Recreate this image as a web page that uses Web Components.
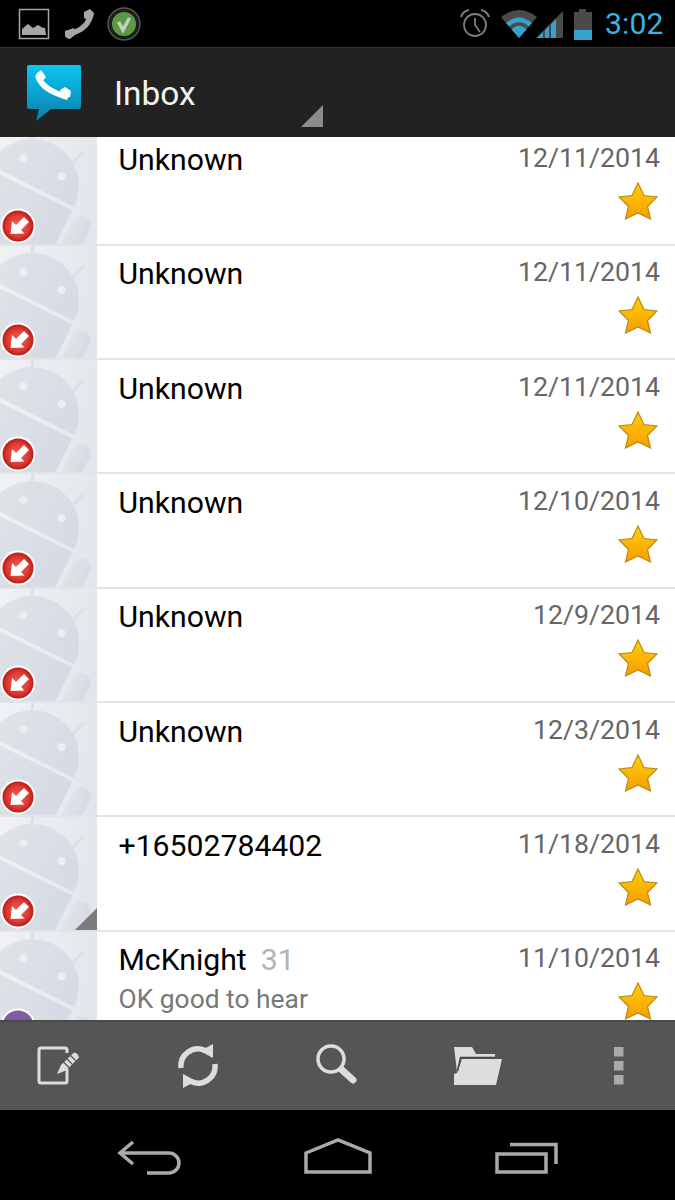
<!DOCTYPE html>
<html>
<head>
<meta charset="utf-8">
<title>Inbox</title>
<style>
  html, body { margin: 0; padding: 0; background: #000; }
  body { width: 675px; height: 1200px; overflow: hidden; display: flex; flex-direction: column; font-family: Roboto, "Liberation Sans", sans-serif; }
  message-list { flex: 1; min-height: 0; }
</style>
</head>
<body>
<status-bar></status-bar>
<action-bar>Inbox</action-bar>
<message-list>
  <message-row date="12/11/2014">Unknown</message-row>
  <message-row date="12/11/2014">Unknown</message-row>
  <message-row date="12/11/2014">Unknown</message-row>
  <message-row date="12/10/2014">Unknown</message-row>
  <message-row date="12/9/2014">Unknown</message-row>
  <message-row date="12/3/2014">Unknown</message-row>
  <message-row date="11/18/2014" corner>+16502784402</message-row>
  <message-row date="11/10/2014" badge="text">McKnight<span slot="count">31</span><span slot="snippet">OK good to hear</span></message-row>
</message-list>
<bottom-toolbar></bottom-toolbar>
<nav-bar></nav-bar>

<script>
/**
 * top status bar, notification icons on the left and system icons on the right
 */
class StatusBar extends HTMLElement {
  constructor() {
    super();
    this.attachShadow({ mode: "open" });
    this.shadowRoot.innerHTML = `
    <style>
      :host { display: flex; flex: none; height: 47px; background: #000; align-items: center; padding: 0 11px 0 18px; box-sizing: border-box; }
      svg { display: block; flex: none; }
      .left { display: flex; align-items: center; }
      .right { display: flex; align-items: center; margin-left: auto; }
      .time { color: #33b5e5; font-size: 30px; line-height: 47px; margin-left: 12px; width: 59px; white-space: nowrap; letter-spacing: 0.2px; }
    </style>
    <div class="left">
      <svg width="32" height="32" viewBox="0 0 32 32">
        <rect x="1.5" y="1.5" width="29" height="29" fill="none" stroke="#a6a6a6" stroke-width="1.5"/>
        <path d="M4 27V21L10 16L15 20L20 17L24 19.5L27 20L28 27Z" fill="#a6a6a6"/>
      </svg>
      <svg width="32" height="32" viewBox="0 0 32 32" style="margin-left:13px">
        <path d="M28 5Q26 21 6 26" fill="none" stroke="#a6a6a6" stroke-width="5.5"/>
        <path d="M21 4L27 1L31 5Q30 11 27 13L21 10Z M2 23L11 20L13 26L7 31Q2 30 2 27Z" fill="#a6a6a6"/>
      </svg>
      <svg width="34" height="34" viewBox="0 0 34 34" style="margin-left:12px">
        <circle cx="17" cy="17" r="16" fill="#1c1c1c" stroke="#555" stroke-width="1.5"/>
        <circle cx="17" cy="17" r="12" fill="#5b9a43"/>
        <path d="M11.5 15L16 23L22.5 11" fill="none" stroke="#c9cfc6" stroke-width="3.5"/>
      </svg>
    </div>
    <div class="right">
      <svg width="32" height="32" viewBox="0 0 32 32">
        <circle cx="16" cy="17" r="11" fill="none" stroke="#7d7d7d" stroke-width="1.8"/>
        <path d="M16 10V17L21 24" fill="none" stroke="#7d7d7d" stroke-width="1.8"/>
        <path d="M2 9Q4 3 10 2M30 9Q28 3 22 2" fill="none" stroke="#7d7d7d" stroke-width="2"/>
      </svg>
      <svg width="36" height="32" viewBox="0 0 36 32" style="margin-left:10px">
        <path d="M0 9Q18 -5 36 9L18 30Z" fill="#4a4a4a"/>
        <path d="M5 15Q18 4 31 15L28 18.5Q18 10 8 18.5Z" fill="#33a3cc"/>
        <path d="M10.5 21.5Q18 14 25.5 21.5L18 30Z" fill="#33a3cc"/>
      </svg>
      <svg width="27" height="32" viewBox="0 0 27 32" style="margin-left:-1px">
        <path d="M0 30L27 3V30Z" fill="#4a4a4a"/>
        <path d="M1 30L7 24V30ZM9 30V22L13 18V30ZM15 30V16L20 11V30Z" fill="#33a3cc"/>
      </svg>
      <svg width="20" height="32" viewBox="0 0 20 32" style="margin-left:10px">
        <path d="M6 1H13V4H19V32H1V4H6Z" fill="#4a4a4a"/>
        <rect x="1" y="22" width="18" height="10" fill="#33a3cc"/>
      </svg>
      <span class="time">3:02</span>
    </div>`;
  }
}
customElements.define("status-bar", StatusBar);

/**
 * action bar, app logo + title + spinner corner
 */
class ActionBar extends HTMLElement {
  constructor() {
    super();
    this.attachShadow({ mode: "open" });
    this.shadowRoot.innerHTML = `
    <style>
      :host { display: flex; flex: none; height: 90px; background: #222; border-top: 1px solid #333; box-sizing: border-box; align-items: center; padding-left: 27px; position: relative; color: #f2f2f2; }
      svg { display: block; flex: none; }
      .title { display: flex; flex: none; width: 208px; height: 89px; padding-left: 33px; font-size: 33.4px; line-height: 91px; box-sizing: border-box; position: relative; }
      .corner { position: absolute; left: 220px; bottom: 10px; }
    </style>
    <svg width="54" height="56" viewBox="0 0 54 56">
      <defs>
        <linearGradient id="bubble" x1="0" y1="0" x2="0" y2="1">
          <stop offset="0" stop-color="#0cc4f2"/>
          <stop offset="1" stop-color="#0a7fa6"/>
        </linearGradient>
      </defs>
      <path d="M2 0H52Q54 0 54 2V42Q54 44 52 44H24L9 56L12 44H2Q0 44 0 42V2Q0 0 2 0Z" fill="url(#bubble)"/>
      <path d="M11 10Q14 25 41 32" fill="none" stroke="#fff" stroke-width="6"/>
      <path d="M9 9L14 5L19 12L15 17Z M33 25L38 22L44 26L43 32L36 34Z" fill="#fff"/>
    </svg>
    <div class="title"><slot></slot>
      <svg class="corner" width="22" height="22" viewBox="0 0 22 22"><path d="M0 22L22 0V22Z" fill="#8c8c8c"/></svg>
    </div>`;
  }
}
customElements.define("action-bar", ActionBar);

/**
 * scrolling list, clips the row that runs under the toolbar
 * the list is scrolled a few px so the first row loses its top
 */
class MessageList extends HTMLElement {
  constructor() {
    super();
    this.attachShadow({ mode: "open" });
    this.shadowRoot.innerHTML = `
    <style>
      :host { display: block; overflow: hidden; background: #fff; }
      .scroller { display: flex; flex-direction: column; margin-top: -5.5px; }
    </style>
    <div class="scroller"><slot></slot></div>`;
  }
}
customElements.define("message-list", MessageList);

/**
 * default contact picture, the grey android cut off by the frame
 */
class ContactPhoto extends HTMLElement {
  constructor() {
    super();
    this.attachShadow({ mode: "open" });
    const badge = this.getAttribute("badge");
    this.shadowRoot.innerHTML = `
    <style>
      :host { display: block; flex: none; width: 97px; height: 100%; position: relative; overflow: hidden; background: linear-gradient(100deg, #f0f2f4, #e1e5ea); }
      svg { display: block; position: absolute; }
      .android { left: 0; top: 0; }
      .badge { left: 0; top: 76px; }
      .corner { right: 0; bottom: 0; }
    </style>
    <svg class="android" width="97" height="113" viewBox="0 0 97 113">
      <defs>
        <linearGradient id="droid" x1="0" y1="0" x2="1" y2="0">
          <stop offset="0" stop-color="#e0e3e8"/>
          <stop offset="1" stop-color="#d5dae3"/>
        </linearGradient>
      </defs>
      <g transform="translate(32 54) rotate(26.5)" fill="url(#droid)">
        <path d="M-47 0A47 47 0 0 1 47 0Z"/>
        <rect x="-47" y="4" width="94" height="110"/>
        <rect x="52" y="4" width="19" height="70" rx="9.5"/>
        <path d="M-21 -42L-26 -56M26 -38L31 -54" stroke="#dce0e6" stroke-width="3"/>
        <circle cx="-20" cy="-21" r="4" fill="#eceef1"/>
        <circle cx="22" cy="-22" r="4" fill="#eceef1"/>
      </g>
    </svg>
    ${badge === "text" ? `
    <svg class="badge" width="36" height="36" viewBox="0 0 36 36">
      <circle cx="18" cy="18" r="17.5" fill="#fff"/>
      <circle cx="18" cy="18" r="15.5" fill="#7d5ea3"/>
    </svg>` : `
    <svg class="badge" width="36" height="36" viewBox="0 0 36 36">
      <defs>
        <radialGradient id="red" cx="0.5" cy="0.5" r="0.5">
          <stop offset="0" stop-color="#f0665c"/>
          <stop offset="0.7" stop-color="#dc3a32"/>
          <stop offset="1" stop-color="#bd1b15"/>
        </radialGradient>
      </defs>
      <circle cx="18" cy="18" r="17.5" fill="#fff"/>
      <circle cx="18" cy="18" r="15.5" fill="url(#red)"/>
      <path d="M10.5 26L12 13L16 17L24 9L29 14L21 22L24.5 25.5Z" fill="#fff"/>
    </svg>`}
    ${this.hasAttribute("corner") ? `
    <svg class="corner" width="22" height="22" viewBox="0 0 22 22"><path d="M0 22L22 0V22Z" fill="#7b7b7b"/></svg>` : ""}`;
  }
}
customElements.define("contact-photo", ContactPhoto);

/**
 * one line of the inbox
 */
class MessageRow extends HTMLElement {
  constructor() {
    super();
    this.attachShadow({ mode: "open" });
    const date = this.getAttribute("date");
    const badge = this.getAttribute("badge") || "missed";
    const corner = this.hasAttribute("corner") ? "corner" : "";
    this.shadowRoot.innerHTML = `
    <style>
      :host { display: flex; flex: none; height: 114.33px; box-sizing: border-box; border-bottom: 2px solid #e4e4e4; background: #fff; color: #000; }
      .body { flex: 1; min-width: 0; padding: 10.5px 0 0 21.5px; }
      .name { font-size: 30.2px; line-height: 36px; white-space: nowrap; }
      ::slotted([slot="count"]) { color: #b3b3b3; margin-left: 14px; }
      .snippet { font-size: 26.4px; line-height: 30px; color: #777; margin-top: 6px; white-space: nowrap; }
      .side { flex: none; display: flex; flex-direction: column; align-items: flex-end; padding: 11.5px 15px 0 0; }
      .date { font-size: 26.7px; line-height: 30px; color: #666; white-space: nowrap; }
      svg { display: block; margin: 9px 2px 0 0; }
    </style>
    <contact-photo badge="${badge}" ${corner}></contact-photo>
    <div class="body">
      <div class="name"><slot></slot><slot name="count"></slot></div>
      <div class="snippet"><slot name="snippet"></slot></div>
    </div>
    <div class="side">
      <div class="date">${date}</div>
      <svg width="40" height="38" viewBox="0 0 40 38">
        <defs>
          <linearGradient id="star" x1="0" y1="0" x2="0" y2="1">
            <stop offset="0" stop-color="#ffcf0a"/>
            <stop offset="1" stop-color="#f79c00"/>
          </linearGradient>
        </defs>
        <path d="M20 1L26 13.5L39 15L29.5 24.5L32.5 37L20 31L7.5 37L10.5 24.5L1 15L14 13.5Z" fill="url(#star)" stroke="#b88a12" stroke-width="1.2"/>
      </svg>
    </div>`;
  }
}
customElements.define("message-row", MessageRow);

/**
 * split action bar at the bottom of the screen
 */
class BottomToolbar extends HTMLElement {
  constructor() {
    super();
    this.attachShadow({ mode: "open" });
    this.shadowRoot.innerHTML = `
    <style>
      :host { display: flex; flex: none; height: 90px; background: #555; border-top: 2px solid #4a4a4a; box-sizing: border-box; align-items: center; justify-content: space-between; padding: 0 35px 0 36px; }
      svg { display: block; overflow: visible; flex: none; }
    </style>
    <svg width="44" height="44" viewBox="0 0 44 44" fill="none" stroke="#ddd">
      <path d="M31 25V37Q31 39 29 39H5Q3 39 3 37V6Q3 4 5 4H29Q31 4 31 6V9" stroke-width="3"/>
      <path d="M21 30L25 21L38 8.5Q42 9 43 13.5L30 26.5Z" fill="#ddd" stroke="none"/>
      <path d="M27.5 18L33 23.5M31 15L36 20M34.5 11.5L39.5 16.5" stroke="#555" stroke-width="1.2"/>
    </svg>
    <svg width="44" height="44" viewBox="0 0 44 44" fill="none" stroke="#ddd">
      <path d="M5 24A17 17 0 0 1 29 6.5" stroke-width="5.5"/>
      <path d="M39 20A17 17 0 0 1 15 37.5" stroke-width="5.5"/>
      <path d="M24 7L37 0V14Z" fill="#ddd" stroke="none"/>
      <path d="M20 37L7 44V30Z" fill="#ddd" stroke="none"/>
    </svg>
    <svg width="44" height="44" viewBox="0 0 44 44" fill="none" stroke="#ddd">
      <circle cx="15" cy="15" r="13" stroke-width="3.5"/>
      <path d="M26 26L37 36" stroke-width="7" stroke-linecap="round"/>
    </svg>
    <svg width="44" height="44" viewBox="0 0 44 44">
      <path d="M-2 3H16L20 10H39V14H5L1 28Z" fill="#ddd"/>
      <path d="M6 15H46L40 41H-2V30L1 29Z" fill="#ddd"/>
      <path d="M39 13.5H4.5L1.5 27" fill="none" stroke="#444" stroke-width="1.5"/>
    </svg>
    <svg width="44" height="44" viewBox="0 0 44 44" fill="#aaa">
      <rect x="18" y="3" width="9.5" height="9.5"/>
      <rect x="18" y="17" width="9.5" height="9.5"/>
      <rect x="18" y="31" width="9.5" height="9.5"/>
    </svg>`;
  }
}
customElements.define("bottom-toolbar", BottomToolbar);

/**
 * soft keys
 */
class NavBar extends HTMLElement {
  constructor() {
    super();
    this.attachShadow({ mode: "open" });
    this.shadowRoot.innerHTML = `
    <style>
      :host { display: flex; flex: none; height: 90px; background: #000; align-items: center; justify-content: space-between; padding: 0 113px 0 115px; box-sizing: border-box; }
      svg { display: block; flex: none; }
    </style>
    <svg width="70" height="60" viewBox="0 0 70 60" fill="none" stroke="#aaa" stroke-width="3.5">
      <path d="M18 17L5 28L18 39"/>
      <path d="M5 28H54A10 10 0 0 1 54 48H32"/>
    </svg>
    <svg width="70" height="60" viewBox="0 0 70 60" fill="none" stroke="#aaa" stroke-width="3.5">
      <path d="M2 28L34 15L66 28V47H2Z"/>
    </svg>
    <svg width="70" height="60" viewBox="0 0 70 60" fill="none" stroke="#aaa" stroke-width="3.5">
      <rect x="5" y="29" width="49" height="18"/>
      <path d="M18 19.5H64V39"/>
    </svg>`;
  }
}
customElements.define("nav-bar", NavBar);
</script>
</body>
</html>
